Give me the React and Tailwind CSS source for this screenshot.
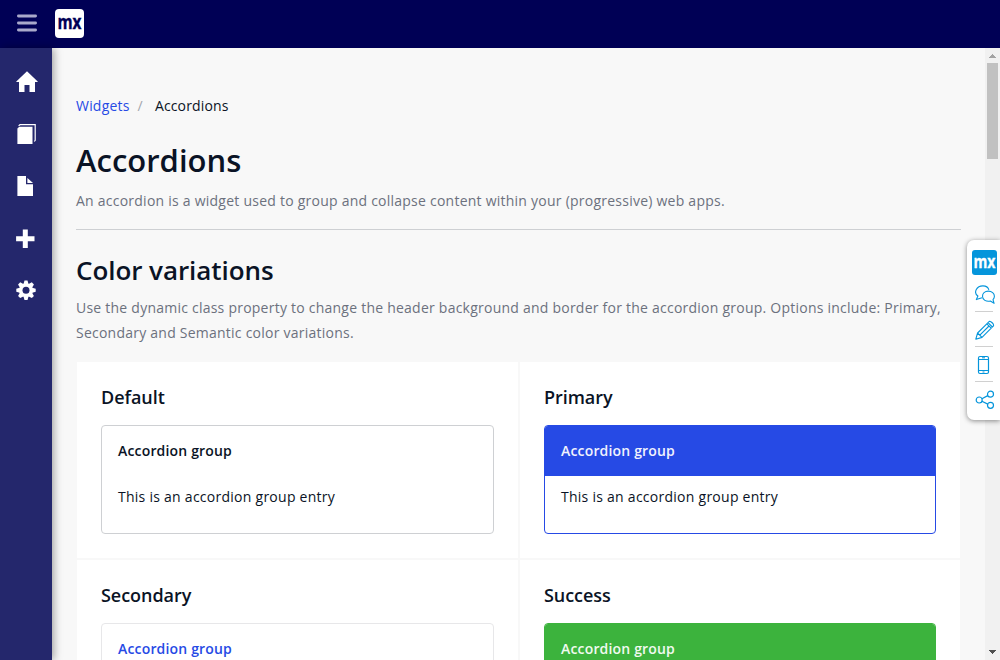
import React from "react";

const groups = [
  { title: "Default", box: "border-[#ced0d3]", head: "text-[#0a1325]" },
  { title: "Primary", box: "border-[#264ae5]", head: "bg-[#264ae5] text-[#f0f2fd]" },
  { title: "Secondary", box: "border-[#e7e7e9]", head: "text-[#264ae5]" },
  { title: "Success", box: "border-[#3cb33d]", head: "bg-[#3cb33d] text-[#f0faf0]" },
];

function MxLogo({ size, className, fontSize, textLength, baseline }) {
  return (
    <svg width={size} height={size} viewBox="0 0 29 29" className={className}>
      <text
        x="14.5"
        y={baseline}
        textAnchor="middle"
        textLength={textLength}
        lengthAdjust="spacingAndGlyphs"
        fontFamily="Open Sans, sans-serif"
        fontWeight="700"
        fontSize={fontSize}
        fill="currentColor"
        stroke="currentColor"
        strokeWidth="0.4"
      >
        mx
      </text>
    </svg>
  );
}

function Header() {
  return (
    <header className="flex h-12 shrink-0 items-center bg-[#000055] pl-[17px]">
      <svg width="20" height="20" viewBox="0 0 20 20" className="-mt-0.5 mr-[18px]" stroke="#a9a9cb" strokeWidth="2.8" strokeLinecap="round">
        <path d="M1.4 3h17.2M1.4 10h17.2M1.4 17h17.2" />
      </svg>
      <MxLogo size={29} fontSize={19.5} textLength={24} baseline={20.2} className="-mt-px rounded-[4px] bg-white text-[#000055]" />
    </header>
  );
}

function Sidebar() {
  return (
    <nav className="z-10 flex w-[52px] shrink-0 flex-col gap-7 bg-[#24276c] pt-[22px] pl-[14px] text-white shadow-[2px_0_8px_rgba(0,0,0,0.35)]">
      <svg width="24" height="24" viewBox="0 0 24 24" fill="currentColor">
        <path d="M13 1.3 23.7 11.6V12H21v10h-5.5v-7h-5v7H5V12H2.3v-.4z" />
      </svg>
      <svg width="24" height="24" viewBox="0 0 24 24" fill="currentColor">
        <path d="M5.3 4.8h13.2V22H3.4V6.5z" />
        <path d="M4.6 3.9 6 2.7h15.2v15.6l-.9 1.2" fill="none" stroke="#fff" strokeWidth="1.2" />
      </svg>
      <svg width="24" height="24" viewBox="0 0 24 24" fill="currentColor">
        <path d="M3.4 2H12v8.2h7V22H3.4z" />
        <path d="M13.4 4v5H19z" />
      </svg>
      <svg width="24" height="24" viewBox="0 0 24 24" fill="currentColor">
        <path d="M8.8 3.6h5v6.7h6.7v5h-6.7V22h-5v-6.7H2.1v-5h6.7z" />
      </svg>
      <svg width="24" height="24" viewBox="0 0 24 24">
        <g transform="translate(12 12.2)" fill="#fff">
          {[0, 45, 90, 135].map((angle) => (
            <path key={angle} d="M-1.5-9.7h3l1 3.4v12.6l-1 3.4h-3l-1-3.4V-6.3z" transform={`rotate(${angle})`} />
          ))}
          <circle r="6.9" />
          <circle r="3.5" fill="#24276c" />
        </g>
      </svg>
    </nav>
  );
}

function Group({ title, box, head }) {
  return (
    <section className="h-[198px] border border-[#f8f8f8] bg-white px-6 pt-[23px]">
      <h3 className="h-10 text-[18px] leading-6 font-semibold tracking-[-0.05px]">{title}</h3>
      <div className={`h-[109px] overflow-hidden rounded-[4px] border ${box}`}>
        <div className={`h-[50px] px-4 py-[13px] text-[14px] leading-6 font-semibold tracking-[0.17px] ${head}`}>Accordion group</div>
        <p className="px-4 pt-[9px] text-[14px] leading-6 tracking-[0.26px]">This is an accordion group entry</p>
      </div>
    </section>
  );
}

function Content() {
  return (
    <main className="w-[933px] overflow-hidden bg-[#f8f8f8] pl-6 text-[#0a1325]">
      <div className="flex pt-[46px] text-[14px] leading-6 tracking-[0.2px]">
        <span className="text-[#264ae5]">Widgets</span>
        <span className="ml-2 text-[#a3a6ad]">/</span>
        <span className="ml-3 tracking-[0.15px]">Accordions</span>
      </div>
      <h1 className="mt-[21px] h-[50px] text-[31px] leading-[42px] font-semibold">Accordions</h1>
      <p className="h-[40px] text-[14px] leading-6 tracking-[0.238px] text-[#6c717e]">
        An accordion is a widget used to group and collapse content within your (progressive) web apps.
      </p>
      <hr className="w-[885px] border-[#ced0d3]" />
      <h2 className="mt-5 h-[45px] text-[26px] leading-10 font-semibold tracking-[-0.06px]">Color variations</h2>
      <p className="h-[66px] w-[885px] text-[14px] leading-[25px] tracking-[0.235px] whitespace-nowrap text-[#6c717e]">
        Use the dynamic class property to change the header background and border for the accordion group. Options include: Primary,
        <br />
        Secondary and Semantic color variations.
      </p>
      <div className="grid w-[885px] grid-cols-[443px_442px]">
        {groups.map((group) => (
          <Group key={group.title} {...group} />
        ))}
      </div>
    </main>
  );
}

function Scrollbar() {
  return (
    <div className="flex w-[15px] shrink-0 flex-col items-center bg-[#f1f1f1]">
      <svg width="15" height="15" shapeRendering="crispEdges">
        <path d="M4 10h7L7.5 6z" fill="#a3a3a3" />
      </svg>
      <div className="h-24 w-[11px] bg-[#c1c1c1]" />
      <svg width="15" height="15" className="mt-auto" shapeRendering="crispEdges">
        <path d="M4 5h7L7.5 9z" fill="#505050" />
      </svg>
    </div>
  );
}

function Toolbox() {
  return (
    <aside className="absolute top-[240px] right-0 z-20 flex h-[180px] w-[33px] flex-col rounded-l-[7px] bg-white pt-2.5 pl-[5px] text-[#0595db] shadow-[0_1px_5px_rgba(0,0,0,0.45)]">
      <MxLogo size={25} fontSize={21.5} textLength={25.5} baseline={21} className="rounded-[3px] bg-[#0595db] text-white" />
      <div className="ml-[3px] flex h-[37px] w-[18px] items-center border-b border-[#d0d0d0] pt-[3px]">
        <svg width="20" height="20" viewBox="0 0 20 20" className="shrink-0" fill="none" stroke="currentColor" strokeWidth="1.1" strokeLinejoin="round">
          <path d="M7 12.8 1.3 14.6 2.9 11C.7 9.5.1 6.9 1.3 4.6 3.7-.2 12.3-.6 13.9 4.9" />
          <path d="M13.3 6.1c-3.5 0-5.8 2.3-5.8 5.2 0 3.7 3.6 5.6 7.8 4.8l3.8 2.2-1.1-3.7c1-1 1.4-2 1.4-3.3 0-2.9-2.6-5.2-6.1-5.2z" />
        </svg>
      </div>
      <div className="ml-[3px] flex h-[35px] w-[18px] items-center border-b border-[#d0d0d0] pt-px">
        <svg width="20" height="20" viewBox="0 0 20 20" className="shrink-0" fill="none" stroke="currentColor" strokeWidth="1.1" strokeLinejoin="round">
          <path d="M.8 19.2 2.6 13 13.8 1.8C15-.1 20.1 4.8 18.2 6.2L7 17.4zM2.6 13 7 17.4M11.8 3.8l4.4 4.4M13 2.6 17.4 7M4.6 15.4 14 6" />
        </svg>
      </div>
      <div className="ml-[3px] flex h-[35px] w-[18px] items-center border-b border-[#d0d0d0] pt-px pl-[2px]">
        <svg width="13" height="20" viewBox="0 0 13 20" fill="none" stroke="currentColor">
          <rect x="1.5" y="1.5" width="10" height="17" rx="1.5" strokeWidth="1.2" />
          <path d="M1.5 4.5h10M1.5 15.5h10M5 2.8h3M5.5 17h2" />
        </svg>
      </div>
      <svg width="20" height="20" viewBox="0 0 20 20" className="mt-2 ml-[3px]" fill="none" stroke="currentColor" strokeWidth="1.2">
        <circle cx="4.2" cy="10" r="3" />
        <circle cx="15.5" cy="4.2" r="3" />
        <circle cx="15.5" cy="15.3" r="3" />
        <path d="m6.9 8.7 5.9-3.1M6.9 11.2l5.9 2.9" />
      </svg>
    </aside>
  );
}

export default function App() {
  return (
    <div className="relative flex h-[660px] w-[1000px] flex-col overflow-hidden font-['Open_Sans',sans-serif]">
      <Header />
      <div className="flex min-h-0 flex-1">
        <Sidebar />
        <Content />
        <Scrollbar />
      </div>
      <Toolbox />
    </div>
  );
}
